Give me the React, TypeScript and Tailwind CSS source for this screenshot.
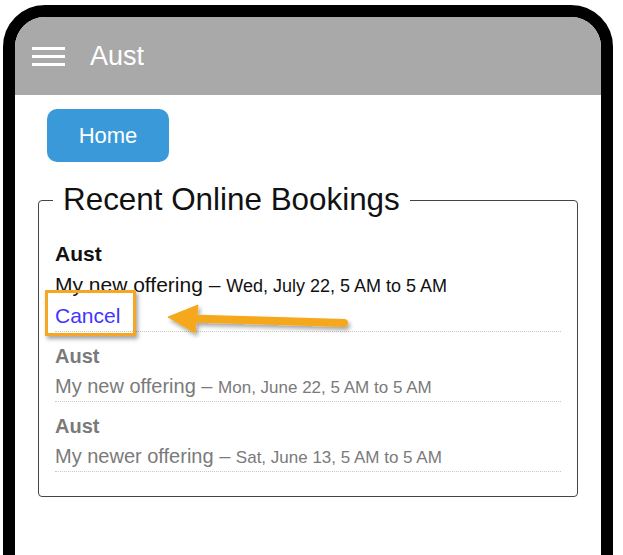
import React from 'react';

interface Booking {
  id: number;
  name: string;
  offering: string;
  when: string;
  upcoming: boolean;
}

const BOOKINGS: Booking[] = [
  { id: 1, name: 'Aust', offering: 'My new offering', when: 'Wed, July 22, 5 AM to 5 AM', upcoming: true },
  { id: 2, name: 'Aust', offering: 'My new offering', when: 'Mon, June 22, 5 AM to 5 AM', upcoming: false },
  { id: 3, name: 'Aust', offering: 'My newer offering', when: 'Sat, June 13, 5 AM to 5 AM', upcoming: false },
];

const App: React.FC = () => {
  return (
    <div className="relative w-[623px] h-[555px] overflow-hidden bg-white font-['Liberation_Sans',Arial,sans-serif]">
      {/* Phone frame */}
      <div className="ml-[3px] mt-[5px] w-[610px] h-[600px] border-[12px] border-black rounded-t-[42px] overflow-hidden bg-white">
        {/* Top bar */}
        <div className="h-[78px] bg-[#a9a9a9] flex items-center pl-[17px]">
          <div className="w-[33px] flex flex-col gap-[5px] mt-[1px]">
            <span className="block h-[3px] bg-white" />
            <span className="block h-[3px] bg-white" />
            <span className="block h-[3px] bg-white" />
          </div>
          <span className="ml-[25px] text-[27px] leading-none text-white">Aust</span>
        </div>

        <div className="px-[23px] pt-[14px]">
          <button className="ml-[9px] w-[122px] h-[53px] rounded-[10px] bg-[#3a9ad9] text-white text-[22px] leading-none">
            Home
          </button>

          <fieldset className="mt-[20px] border border-[#444] rounded-[4px] px-[16px] pt-[11px] pb-[24px]">
            <legend className="-ml-[2px] px-[10px] text-[31.4px] leading-[36px] text-[#111]">
              Recent Online Bookings
            </legend>

            {BOOKINGS.map((b) =>
              b.upcoming ? (
                <div key={b.id} className="pt-[9px] border-b border-dotted border-[#c8c8c8] text-[#111] text-[21px] leading-[31px]">
                  <div className="font-bold">{b.name}</div>
                  <div className="whitespace-nowrap">
                    {b.offering} – <span className="text-[18px] leading-none">{b.when}</span>
                  </div>
                  <div>
                    <a href="#" className="text-[#4036ff]">Cancel</a>
                  </div>
                </div>
              ) : (
                <div key={b.id} className="pt-[9px] border-b border-dotted border-[#c8c8c8] text-[#7a7a7a] text-[20px] leading-[30px]">
                  <div className="font-bold">{b.name}</div>
                  <div className="whitespace-nowrap">
                    {b.offering} – <span className="text-[17px] leading-none">{b.when}</span>
                  </div>
                </div>
              )
            )}
          </fieldset>
        </div>
      </div>

      {/* Annotation: highlight box */}
      <div className="absolute left-[45px] top-[290px] w-[91px] h-[46px] border-[3px] border-[#f5a623] shadow-[2px_3px_4px_rgba(0,0,0,0.35)] pointer-events-none" />

      {/* Annotation: arrow */}
      <svg className="absolute left-0 top-0 pointer-events-none" width="623" height="555" viewBox="0 0 623 555">
        <defs>
          <filter id="arrowShadow" x="-10%" y="-50%" width="120%" height="200%">
            <feDropShadow dx="2" dy="3" stdDeviation="2" floodColor="#000" floodOpacity="0.35" />
          </filter>
        </defs>
        <g filter="url(#arrowShadow)" fill="#f5a81c" stroke="#f5a81c">
          <line x1="190" y1="318.5" x2="344" y2="323" strokeWidth="8" strokeLinecap="round" />
          <polygon points="168,317 198,305 195,333" strokeWidth="1" strokeLinejoin="round" />
        </g>
      </svg>
    </div>
  );
};

export default App;
